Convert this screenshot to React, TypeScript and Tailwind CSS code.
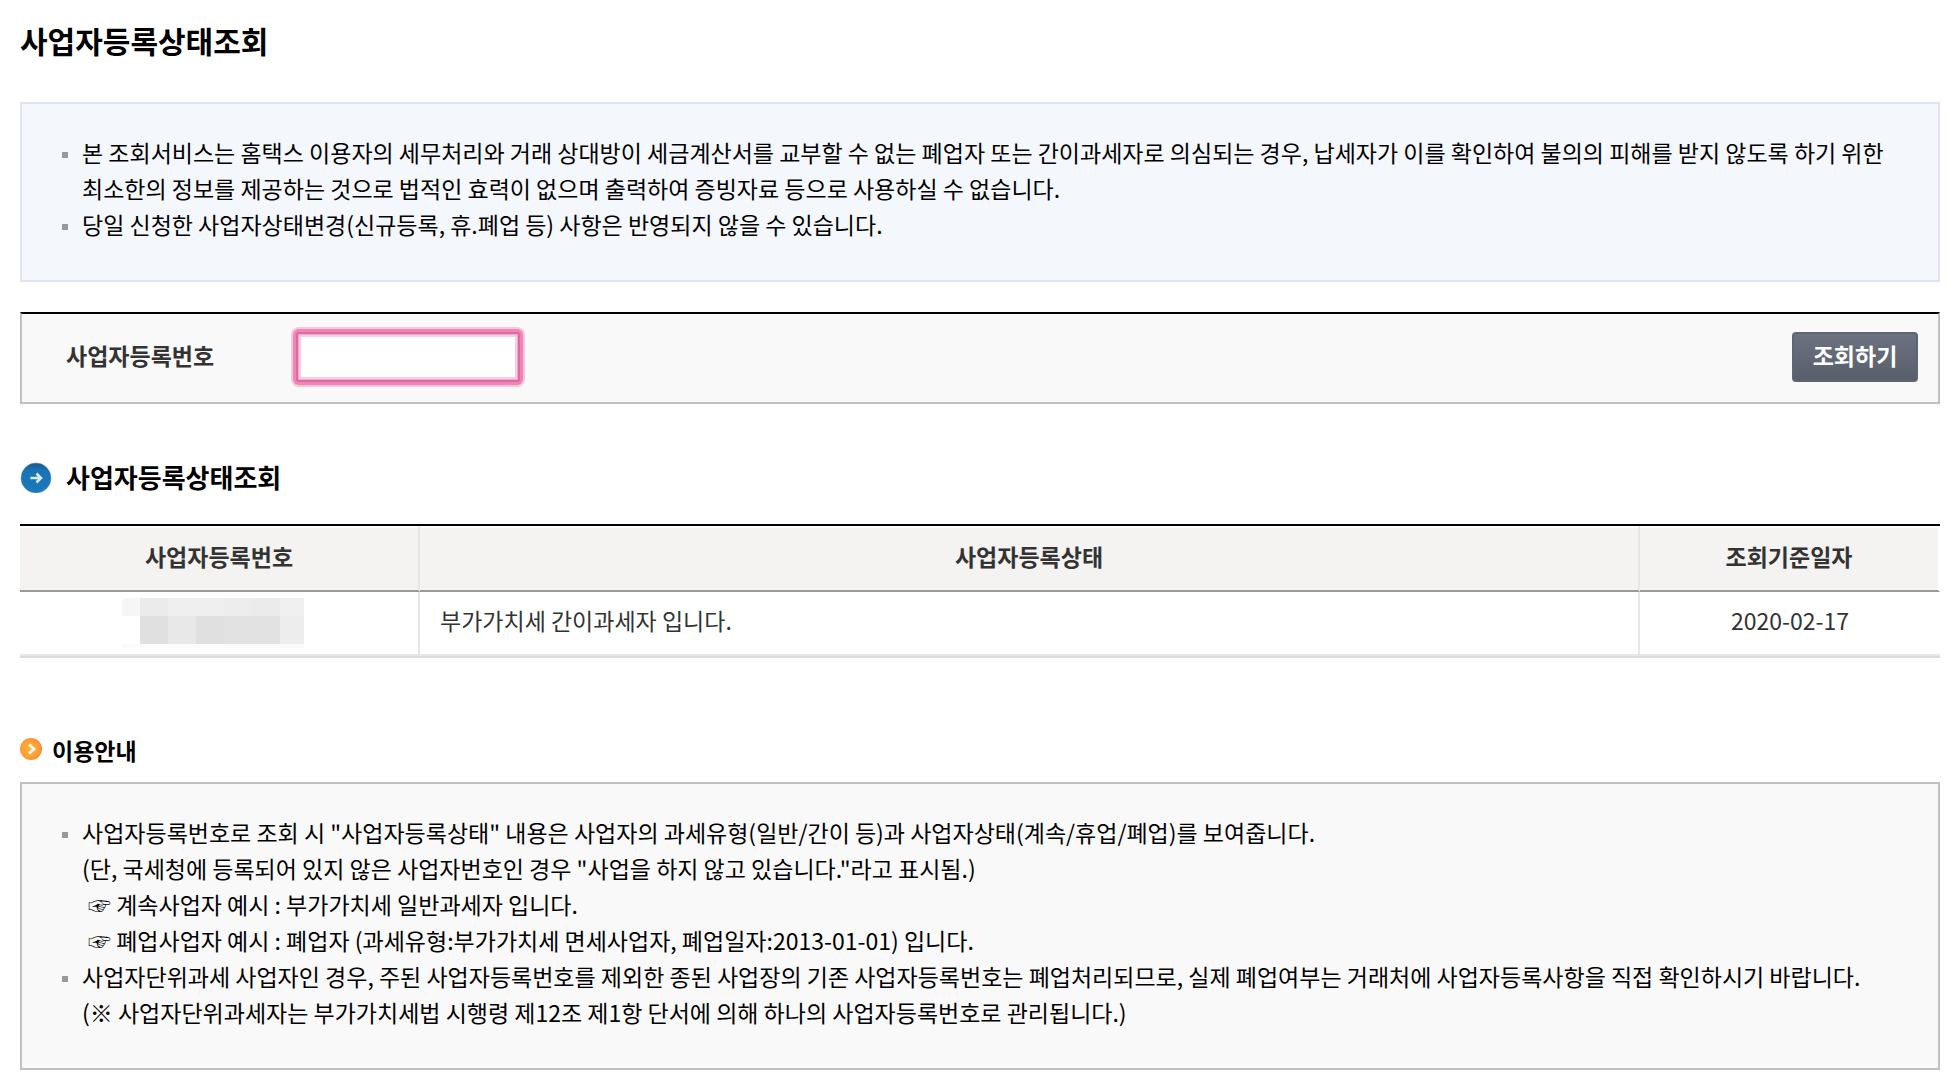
import { useState } from "react";
import type { ReactNode } from "react";

function ArrowIcon() {
  return (
    <svg width="32" height="32" viewBox="0 0 32 32" aria-hidden="true">
      <defs>
        <linearGradient id="blue" x1="0" y1="0" x2="0" y2="1">
          <stop offset="0" stopColor="#17598f" />
          <stop offset="0.25" stopColor="#1b72b2" />
          <stop offset="1" stopColor="#1a79ba" />
        </linearGradient>
      </defs>
      <circle cx="16" cy="17" r="15" fill="url(#blue)" stroke="#5d93bd" strokeWidth="0.6" />
      <path d="M10.500 17h10M16.500 12.500l4.500 4.500-4.500 4.500" fill="none" stroke="#d6ecfa" strokeWidth="2.500" />
    </svg>
  );
}

function ChevronIcon() {
  return (
    <svg width="24" height="24" viewBox="0 0 24 24" aria-hidden="true">
      <defs>
        <radialGradient id="orange" cx="0.45" cy="0.5" r="0.55">
          <stop offset="0" stopColor="#ffb23a" />
          <stop offset="0.7" stopColor="#fda033" />
          <stop offset="1" stopColor="#f68b38" />
        </radialGradient>
      </defs>
      <circle cx="11" cy="11" r="11" fill="url(#orange)" />
      <path d="M9 6.500l5 4.500-5 4.500" fill="none" stroke="#fff6e6" strokeWidth="3" />
    </svg>
  );
}

function NoticeItem({ children }: { children: ReactNode }) {
  return (
    <li className="flex gap-3.5">
      <span className="mt-[18px] h-1.5 w-1.5 shrink-0 bg-[#999]" />
      <div>{children}</div>
    </li>
  );
}

// masked business number
function MaskedNumber() {
  return (
    <div
      role="img"
      aria-label="사업자등록번호 비공개"
      className="ml-[102px] grid w-[182px] grid-cols-[18px_repeat(5,28px)_24px] grid-rows-[18px_28px_4px]"
    >
      <span className="rounded-tl bg-[#f6f6f6]" />
      <span className="bg-[#ebebeb]" />
      <span className="col-span-2 bg-[#efefef]" />
      <span className="bg-[#ededed]" />
      <span className="bg-[#ebebeb]" />
      <span className="bg-[#f0f0f0]" />
      <span />
      <span className="bg-[#e0e0e0]" />
      <span className="bg-[#e8e8e8]" />
      <span className="bg-[#e0e0e0]" />
      <span className="col-span-2 bg-[#e2e2e2]" />
      <span className="bg-[#ededed]" />
      <span className="col-span-7 bg-[#fbfbfb]" />
    </div>
  );
}

const results = [{ status: "부가가치세 간이과세자 입니다.", date: "2020-02-17" }];

export default function App() {
  const [bizNo, setBizNo] = useState("");

  return (
    <main className="pt-3.5 pr-4 pl-5 font-['Noto_Sans_CJK_KR',sans-serif] text-[23px] leading-9 text-black">
      <h1 className="text-[30px] leading-[52px] font-bold">사업자등록상태조회</h1>

      <ul className="mt-9 border-2 border-[#dfe5ee] bg-[#f4f7fc] pt-[30px] pr-10 pb-[38px] pl-10">
        <NoticeItem>
          본 조회서비스는 홈택스 이용자의 세무처리와 거래 상대방이 세금계산서를 교부할 수 없는 폐업자 또는 간이과세자로 의심되는 경우, 납세자가 이를 확인하여 불의의 피해를 받지 않도록 하기 위한
          <br />
          최소한의 정보를 제공하는 것으로 법적인 효력이 없으며 출력하여 증빙자료 등으로 사용하실 수 없습니다.
        </NoticeItem>
        <NoticeItem>당일 신청한 사업자상태변경(신규등록, 휴.폐업 등) 사항은 반영되지 않을 수 있습니다.</NoticeItem>
      </ul>

      <form
        className="mt-[30px] flex h-[92px] items-center border-2 border-[#c0c0c0] border-t-black bg-[#f9f9f9] pr-5 pb-0.5 pl-11"
        onSubmit={(e) => e.preventDefault()}
      >
        <label htmlFor="bizNo" className="w-[230px] pb-1 font-bold text-[#333]">
          사업자등록번호
        </label>
        <input
          id="bizNo"
          className="h-[50px] w-[224px] rounded-[3px] border-2 border-[#dd6ba2] bg-white px-2 shadow-[0_0_0_3px_#f084b5,0_0_0_5px_#f6c8dc,inset_0_0_0_1px_#f3a9c9,inset_0_0_0_3px_#f8cfe1] outline-none"
          value={bizNo}
          onChange={(e) => setBizNo(e.target.value)}
        />
        <button
          type="submit"
          className="ml-auto h-[50px] w-[126px] rounded border-2 border-[#5f6572] bg-linear-to-b from-[#6c7280] to-[#595e6b] pb-1 font-bold text-white"
        >
          조회하기
        </button>
      </form>

      <h2 className="mt-[53px] flex items-center gap-3.5 text-[26px] leading-10 font-bold">
        <ArrowIcon />
        사업자등록상태조회
      </h2>

      <table className="mt-[27px] w-full table-fixed border-separate border-spacing-0 border-t-2 border-b-2 border-t-black border-b-[#ddd] text-[#333]">
        <colgroup>
          <col className="w-[400px]" />
          <col />
          <col className="w-[300px]" />
        </colgroup>
        <thead>
          <tr className="h-[66px] bg-[#f4f3f1]">
            <th className="border-2 border-t-white border-r-[#e6e6e6] border-b-[#999] border-l-0 pb-1.5 font-bold">사업자등록번호</th>
            <th className="border-2 border-t-white border-r-[#e6e6e6] border-b-[#999] border-l-0 pb-1.5 font-bold">사업자등록상태</th>
            <th className="border-2 border-t-white border-r-white border-b-[#999] border-l-0 pb-1.5 font-bold">조회기준일자</th>
          </tr>
        </thead>
        <tbody>
          {results.map((row) => (
            <tr key={row.date} className="h-16">
              <td className="border-r-2 border-b-2 border-[#e6e6e6]">
                <MaskedNumber />
              </td>
              <td className="border-r-2 border-b-2 border-[#e6e6e6] pb-1.5 pl-5">{row.status}</td>
              <td className="border-b-2 border-[#e6e6e6] pb-1.5 text-center">{row.date}</td>
            </tr>
          ))}
        </tbody>
      </table>

      <h3 className="mt-[74px] flex items-center gap-2 leading-9 font-bold">
        <ChevronIcon />
        이용안내
      </h3>

      <ul className="mt-3.5 mb-5 border-2 border-[#c0c0c0] bg-[#f9f9f9] pt-[30px] pr-10 pb-[38px] pl-10">
        <NoticeItem>
          사업자등록번호로 조회 시 "사업자등록상태" 내용은 사업자의 과세유형(일반/간이 등)과 사업자상태(계속/휴업/폐업)를 보여줍니다.
          <br />
          (단, 국세청에 등록되어 있지 않은 사업자번호인 경우 "사업을 하지 않고 있습니다."라고 표시됨.)
          <p className="pl-1.5">☞ 계속사업자 예시 : 부가가치세 일반과세자 입니다.</p>
          <p className="pl-1.5">☞ 폐업사업자 예시 : 폐업자 (과세유형:부가가치세 면세사업자, 폐업일자:2013-01-01) 입니다.</p>
        </NoticeItem>
        <NoticeItem>
          사업자단위과세 사업자인 경우, 주된 사업자등록번호를 제외한 종된 사업장의 기존 사업자등록번호는 폐업처리되므로, 실제 폐업여부는 거래처에 사업자등록사항을 직접 확인하시기 바랍니다.
          <br />
          (※ 사업자단위과세자는 부가가치세법 시행령 제12조 제1항 단서에 의해 하나의 사업자등록번호로 관리됩니다.)
        </NoticeItem>
      </ul>
    </main>
  );
}
